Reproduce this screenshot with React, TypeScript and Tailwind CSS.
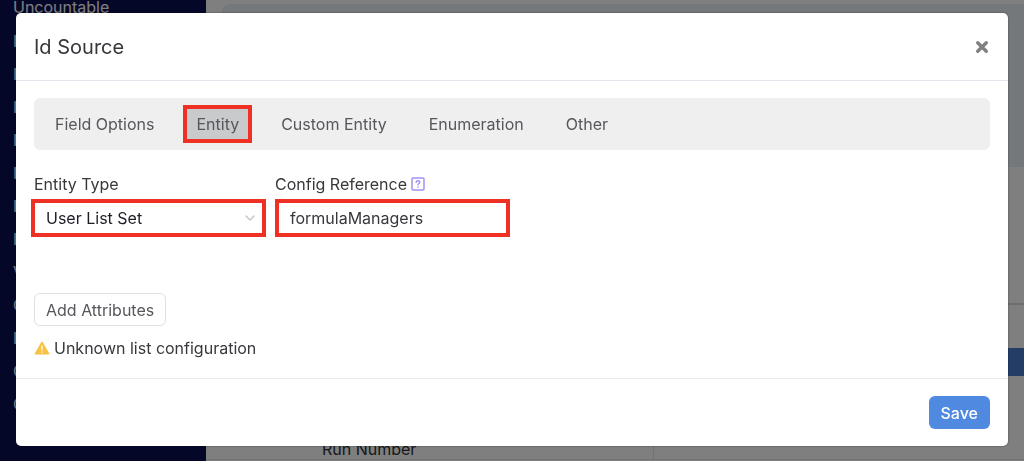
import { useState } from 'react';
import { clsx } from 'clsx';
import { ChevronDown } from 'lucide-react';

const tabs = ['Field Options', 'Entity', 'Custom Entity', 'Enumeration', 'Other'];
const navItems = ['I', 'I', 'I', 'I', 'I', 'I', 'I', 'V', 'C', 'I', 'C', 'C'];

function CloseIcon() {
  return (
    <svg viewBox="0 0 14 14" className="size-[14px]" fill="none" stroke="currentColor" strokeWidth="3.4" strokeLinecap="round">
      <path d="M2.7 2.7 11.3 11.3M11.3 2.7 2.7 11.3" />
    </svg>
  );
}

function HelpIcon() {
  return (
    <svg viewBox="0 0 14 14" className="size-[14px]" fill="none" stroke="#a291f8" strokeWidth="1.5" strokeLinecap="round" strokeLinejoin="round">
      <rect x="1" y="1" width="12" height="12" rx="1" />
      <path d="M5.2 5.3c.1-1 .8-1.5 1.8-1.5s1.8.6 1.8 1.5c0 1.2-1.8 1.2-1.8 2.4" />
      <path d="M7 10.1v.1" />
    </svg>
  );
}

function WarningIcon() {
  return (
    <svg viewBox="0 0 16 14" className="h-[14px] w-4 shrink-0">
      <path d="M8 1.4 14.6 12.8H1.4Z" fill="#f6c244" stroke="#f6c244" strokeWidth="1.6" strokeLinejoin="round" />
      <path d="M8 5v3.8M8 11v.3" stroke="#fff3d0" strokeWidth="1.6" strokeLinecap="round" />
    </svg>
  );
}

function Backdrop() {
  return (
    <div className="flex h-screen overflow-hidden bg-white" aria-hidden="true">
      {/* Sidebar */}
      <nav className="w-[206px] shrink-0 bg-[#0a0e52] pl-[13px] text-white">
        <p className="mt-[-6px] h-[34px] leading-[26px]">Uncountable</p>
        <ul>
          {navItems.map((item, i) => (
            <li key={i} className="h-[34px] leading-[26px] not-last:mb-[-1px]">
              {item}
            </li>
          ))}
        </ul>
      </nav>

      {/* Page content */}
      <main className="flex grow flex-col">
        <div className="mt-1 ml-4 h-[163px] shrink-0 rounded-tl-lg bg-[#eaf1f5]" />
        <div className="h-[138px] shrink-0 border-b-2 border-[#dcdcdc]" />
        <div className="mt-[43px] h-7 shrink-0 bg-[#467acc]" />
        <div className="mt-[56px] flex h-7 shrink-0 border-b border-[#e4e4e4]">
          <div className="w-[448px] border-r border-[#e4e4e4] pl-[116px] leading-[34px] text-[#303134]">
            Run Number
          </div>
        </div>
      </main>
    </div>
  );
}

export default function App() {
  const [activeTab, setActiveTab] = useState('Entity');
  const [configRef, setConfigRef] = useState('formulaManagers');

  return (
    <div className="font-['Inter',sans-serif] text-base text-[#37383c]">
      <Backdrop />

      <div className="fixed inset-0 overflow-hidden bg-black/50 px-4 pt-[13px]">
        <div role="dialog" aria-labelledby="dialog-title" className="rounded-[5px] bg-white shadow-[0_0_2px_rgba(0,0,0,0.5)]">
          {/* Header */}
          <header className="flex h-[68px] items-center justify-between border-b border-[#e5e5ee] px-[18px]">
            <h1 id="dialog-title" className="text-xl">Id Source</h1>
            <button type="button" aria-label="Close" className="flex size-4 items-center justify-center text-[#808080]">
              <CloseIcon />
            </button>
          </header>

          {/* Body */}
          <div className="px-[15px] pt-[17px] pb-[18px]">
            <div role="tablist" className="mx-[3px] flex gap-4 rounded-md bg-[#efefef] px-2 py-[7px] text-[#56575d]">
              {tabs.map((tab) => (
                <button
                  key={tab}
                  type="button"
                  role="tab"
                  aria-selected={tab === activeTab}
                  onClick={() => setActiveTab(tab)}
                  className={clsx(
                    'h-[38px] border-4 px-[9px]',
                    tab === activeTab ? 'border-[#ee3124] bg-[#c9cacc]' : 'border-transparent'
                  )}
                >
                  {tab}
                </button>
              ))}
            </div>

            <div className="mt-[22px] flex gap-[9px]">
              <div className="flex w-[235px] flex-col gap-[3px]">
                <label htmlFor="entity-type" className="pl-[3px]">Entity Type</label>
                <div className="relative">
                  <select
                    id="entity-type"
                    className="h-[38px] w-full appearance-none border-4 border-[#ee3124] bg-white pl-[11px] text-[#1c1d26]"
                  >
                    <option>User List Set</option>
                  </select>
                  <ChevronDown className="pointer-events-none absolute top-[11px] right-2 size-4 text-[#c4c4c4]" />
                </div>
              </div>
              <div className="flex w-[235px] flex-col gap-[3px]">
                <div className="flex items-center gap-1">
                  <label htmlFor="config-reference">Config Reference</label>
                  <button type="button" aria-label="Help">
                    <HelpIcon />
                  </button>
                </div>
                <input
                  id="config-reference"
                  value={configRef}
                  onChange={(e) => setConfigRef(e.target.value)}
                  className="h-[38px] w-full border-4 border-[#ee3124] bg-white pl-[11px]"
                />
              </div>
            </div>

            <button
              type="button"
              className="mx-[3px] mt-14 h-[33px] rounded-md border border-[#dfe0e4] px-[11px] text-[#56575d]"
            >
              Add Attributes
            </button>

            <p className="mx-[3px] mt-[10px] flex items-center gap-1">
              <WarningIcon />
              Unknown list configuration
            </p>
          </div>

          {/* Footer */}
          <footer className="flex justify-end border-t border-[#e8e9ec] px-[18px] py-[17px]">
            <button type="button" className="h-[33px] rounded-md bg-[#5089e0] px-3 font-medium text-white">
              Save
            </button>
          </footer>
        </div>
      </div>
    </div>
  );
}
